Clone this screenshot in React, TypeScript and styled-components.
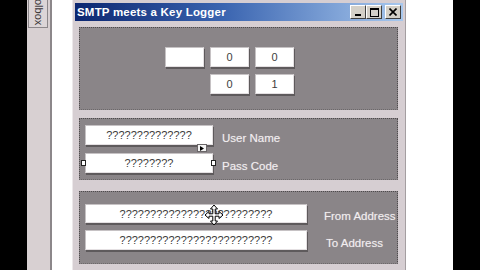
import styled, { createGlobalStyle } from 'styled-components';

const Global = createGlobalStyle`
  html, body {
    margin: 0;
    padding: 0;
    background: #000;
  }
  * {
    box-sizing: border-box;
  }
`;

const Screen = styled.div`
  display: flex;
  width: 480px;
  height: 270px;
  overflow: hidden;
  background: #000;
  font-family: 'Liberation Sans', Arial, sans-serif;
`;

const Gutter = styled.div<{ $w: number }>`
  flex: 0 0 ${(p) => p.$w}px;
  background: #000;
`;

const Blank = styled.div<{ $w: number }>`
  flex: 0 0 ${(p) => p.$w}px;
  background: #fff;
`;

const ToolboxStrip = styled.div`
  flex: 0 0 25px;
  background: #d8d0d2;
  border-right: 2px solid #8c878a;
  padding-left: 1px;
`;

// the tab runs off the top of the screen, only the tail of its label shows
const ToolboxTab = styled.div`
  width: 20px;
  height: 28px;
  border: 1px solid #8c878a;
  border-top: none;
  background: #dcd5d7;
  display: flex;
  flex-direction: column;
  justify-content: flex-end;
  align-items: center;
  padding-bottom: 2px;
`;

const TabLabel = styled.span`
  writing-mode: vertical-rl;
  font-size: 11px;
  line-height: 11px;
  color: #3a3638;
  white-space: nowrap;
`;

const Window = styled.div`
  flex: 0 0 334px;
  display: flex;
  flex-direction: column;
  background: #d6ced2;
  border-left: 1px solid #ece8ea;
  border-right: 1px solid #a49ea1;
  padding: 3px 2px 0 2px;
`;

const TitleBar = styled.div`
  height: 18px;
  flex: 0 0 18px;
  display: flex;
  align-items: center;
  justify-content: space-between;
  padding: 0 2px 0 2px;
  background: linear-gradient(90deg, #0c2670 0%, #3a64b0 45%, #a8c8ee 100%);
`;

const Title = styled.span`
  color: #fff;
  font-weight: bold;
  font-size: 11.5px;
  letter-spacing: 0.2px;
`;

const Controls = styled.div`
  display: flex;
  align-items: center;
`;

const CtlButton = styled.div<{ $gap?: number }>`
  width: 16px;
  height: 14px;
  margin-left: ${(p) => p.$gap ?? 0}px;
  background: #d4d0c8;
  border-top: 1px solid #fff;
  border-left: 1px solid #fff;
  border-right: 1px solid #404040;
  border-bottom: 1px solid #404040;
  display: flex;
  align-items: center;
  justify-content: center;
`;

const Body = styled.div`
  display: flex;
  flex-direction: column;
  padding: 6px 5px 0 4px;
`;

const Panel = styled.div<{ $h: number; $mt?: number }>`
  height: ${(p) => p.$h}px;
  margin-top: ${(p) => p.$mt ?? 0}px;
  background: #8a8588;
  border: 1px dotted #4e4a4c;
  border-bottom-color: #6c686a;
`;

const ClockGrid = styled.div`
  display: grid;
  grid-template-columns: repeat(3, 39px);
  grid-auto-rows: 20px;
  column-gap: 6px;
  row-gap: 7px;
  padding: 19px 0 0 85px;
`;

const Field = styled.div<{ $w?: number; $h?: number; $col?: number }>`
  position: relative;
  width: ${(p) => (p.$w ? `${p.$w}px` : 'auto')};
  height: ${(p) => p.$h ?? 20}px;
  grid-column: ${(p) => p.$col ?? 'auto'};
  background: #fff;
  border-top: 1px solid #c6c2c4;
  border-left: 1px solid #c6c2c4;
  border-right: 1px solid #e4e0e2;
  border-bottom: 1px solid #e4e0e2;
  box-shadow: 1px 2px 0 #5e5a5c;
  display: flex;
  align-items: center;
  justify-content: center;
  font-size: 11px;
  color: #3c3c3c;
  white-space: nowrap;
`;

const Rows = styled.div<{ $pt: number; $gap: number }>`
  display: flex;
  flex-direction: column;
  gap: ${(p) => p.$gap}px;
  padding: ${(p) => p.$pt}px 0 0 5px;
`;

const Row = styled.div<{ $gap: number }>`
  display: flex;
  align-items: center;
  gap: ${(p) => p.$gap}px;
`;

const Label = styled.span<{ $indent?: number }>`
  color: #f2eef0;
  font-size: 11.5px;
  padding-top: 5px;
  margin-left: ${(p) => p.$indent ?? 0}px;
  text-shadow: 0 0 1px #b8b2b5;
  white-space: nowrap;
`;

const Handle = styled.span<{ $side: 'left' | 'right' }>`
  position: absolute;
  top: 6px;
  ${(p) => (p.$side === 'left' ? 'left: -5px;' : 'right: -4px;')}
  width: 5px;
  height: 6px;
  background: #fff;
  border: 1px solid #222;
`;

const SmartTag = styled.span`
  position: absolute;
  left: 111px;
  top: 18px;
  width: 10px;
  height: 8px;
  background: #f4f4f4;
  border: 1px solid #6a6668;
  display: flex;
  align-items: center;
  justify-content: center;
`;

const MoveCursor = styled.svg`
  position: absolute;
  left: 118px;
  top: -1px;
`;

export default function App() {
  return (
    <>
      <Global />
      <Screen>
        <Gutter $w={27} />
        <ToolboxStrip>
          <ToolboxTab>
            <TabLabel>olbox</TabLabel>
          </ToolboxTab>
        </ToolboxStrip>
        <Blank $w={20} />
        <Window>
          <TitleBar>
            <Title>SMTP meets a Key Logger</Title>
            <Controls>
              <CtlButton>
                <svg width="8" height="8" viewBox="0 0 8 8">
                  <rect x="1" y="6" width="6" height="2" fill="#000" />
                </svg>
              </CtlButton>
              <CtlButton>
                <svg width="9" height="9" viewBox="0 0 9 9">
                  <rect x="0.5" y="0.5" width="8" height="8" fill="none" stroke="#000" />
                  <rect x="0" y="0" width="9" height="2" fill="#000" />
                </svg>
              </CtlButton>
              <CtlButton $gap={3}>
                <svg width="8" height="8" viewBox="0 0 8 8">
                  <path d="M0.5 0.5 L7.5 7.5 M7.5 0.5 L0.5 7.5" stroke="#000" strokeWidth="1.6" />
                </svg>
              </CtlButton>
            </Controls>
          </TitleBar>
          <Body>
            <Panel $h={83}>
              <ClockGrid>
                <Field />
                <Field>0</Field>
                <Field>0</Field>
                <Field $col={2}>0</Field>
                <Field>1</Field>
              </ClockGrid>
            </Panel>
            <Panel $h={62} $mt={8}>
              <Rows $pt={6} $gap={8}>
                <Row $gap={9}>
                  <Field $w={128}>
                    ??????????????
                    <SmartTag>
                      <svg width="4" height="5" viewBox="0 0 4 5">
                        <path d="M0 0 L4 2.5 L0 5 Z" fill="#000" />
                      </svg>
                    </SmartTag>
                  </Field>
                  <Label>User Name</Label>
                </Row>
                <Row $gap={9}>
                  <Field $w={128}>
                    ????????
                    <Handle $side="left" />
                    <Handle $side="right" />
                  </Field>
                  <Label>Pass Code</Label>
                </Row>
              </Rows>
            </Panel>
            <Panel $h={73} $mt={11}>
              <Rows $pt={12} $gap={7}>
                <Row $gap={17}>
                  <Field $w={222} $h={19}>
                    ?????????????????????????
                    <MoveCursor width="20" height="22" viewBox="0 0 20 22">
                      <path
                        d="M10 1 L13.5 5 L11.2 5 L11.2 9.8 L15 9.8 L15 7.5 L19 11 L15 14.5 L15 12.2 L11.2 12.2 L11.2 17 L13.5 17 L10 21 L6.5 17 L8.8 17 L8.8 12.2 L5 12.2 L5 14.5 L1 11 L5 7.5 L5 9.8 L8.8 9.8 L8.8 5 L6.5 5 Z"
                        fill="#fff"
                        stroke="#000"
                        strokeWidth="1"
                        strokeLinejoin="round"
                      />
                    </MoveCursor>
                  </Field>
                  <Label>From Address</Label>
                </Row>
                <Row $gap={17}>
                  <Field $w={222}>?????????????????????????</Field>
                  <Label $indent={2}>To Address</Label>
                </Row>
              </Rows>
            </Panel>
          </Body>
        </Window>
        <Blank $w={47} />
        <Gutter $w={27} />
      </Screen>
    </>
  );
}
